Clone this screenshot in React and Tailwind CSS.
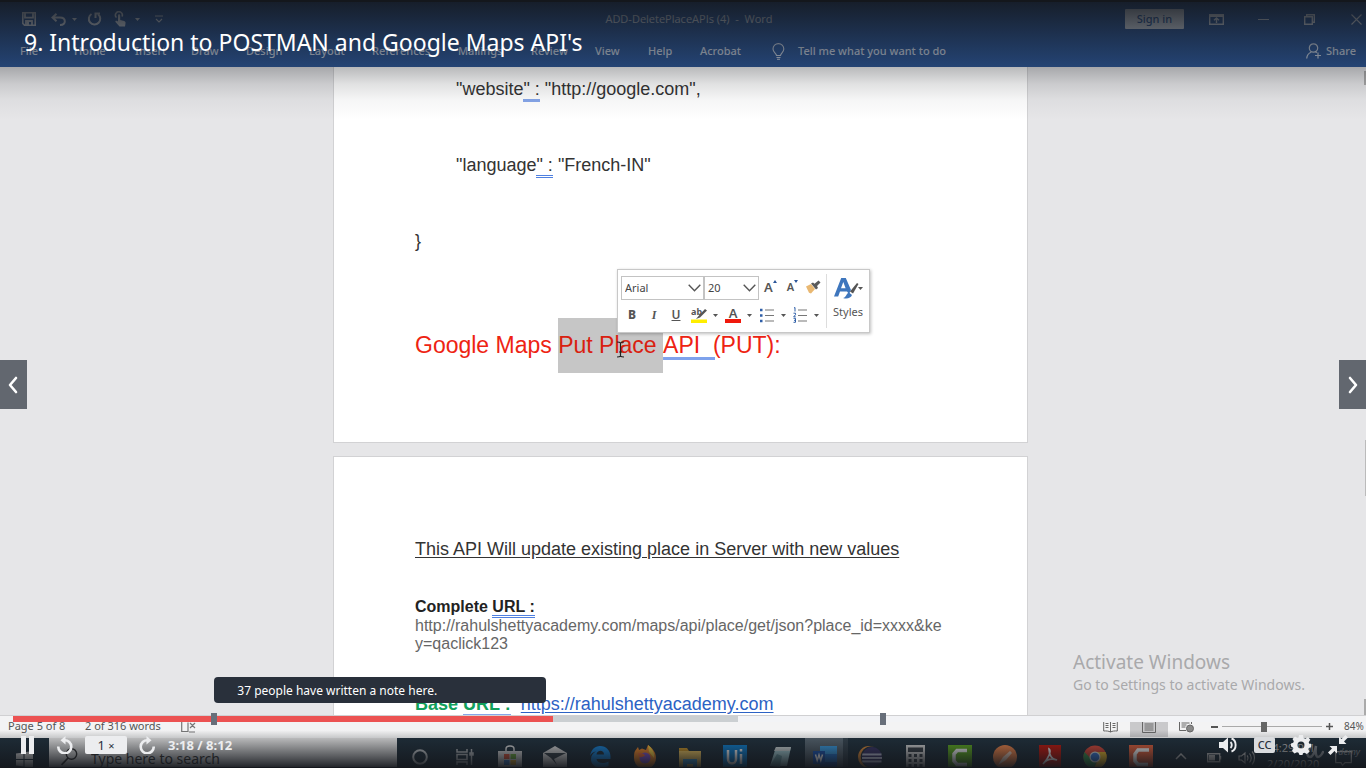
import React from "react";

const ui = "font-['Noto_Sans','Open_Sans',sans-serif]";

const tabs = [
  ["File", "w-[54px]"],
  ["Home", "w-[61px]"],
  ["Insert", "w-[56px]"],
  ["Draw", "w-[55px]"],
  ["Design", "w-[63px]"],
  ["Layout", "w-[63px]"],
  ["References", "w-[86px]"],
  ["Mailings", "w-[73px]"],
  ["Review", "w-[64px]"],
  ["View", "w-[53px]"],
  ["Help", "w-[52px]"],
  ["Acrobat", "w-[72px]"],
];

function Svg({ w = 16, h = 16, box, className = "", children }) {
  return (
    <svg
      width={w}
      height={h}
      viewBox={box || `0 0 ${w} ${h}`}
      className={`shrink-0 ${className}`}
      fill="none"
      stroke="currentColor"
      strokeWidth="1.4"
      aria-hidden="true"
    >
      {children}
    </svg>
  );
}

function Caret({ className = "" }) {
  return (
    <Svg w={5} h={3} className={className}>
      <path d="M0 0h5L2.500 3z" fill="currentColor" stroke="none" />
    </Svg>
  );
}

function TitleBar() {
  return (
    <div className="grid h-[34px] grid-cols-[1fr_auto_1fr] items-center pl-3 text-white">
      <div className="flex items-center pl-[10px] opacity-80">
        <button aria-label="Save">
          <Svg w={14} h={14}>
            <path d="M.7.7h12.600v12.600H2.700l-2-2z M3 .7v5h8v-5 M4 13V9h6v4" strokeWidth="1.800" />
            <path d="M5 10h2v3H5z" fill="currentColor" stroke="none" />
          </Svg>
        </button>
        <button aria-label="Undo" className="ml-[15px] flex items-center gap-[6px]">
          <Svg w={15} h={13}>
            <path d="M5.500.8 1.500 4.500l4 3.700M2 4.500h7c3 0 4.800 1.400 4.800 3.800S12 12 9 12" strokeWidth="2" />
          </Svg>
          <Caret />
        </button>
        <button aria-label="Repeat" className="ml-[10px]">
          <Svg w={15} h={14}>
            <path d="M4.500 2A5.700 5.700 0 1 0 11 2.300" strokeWidth="2" />
            <path d="M8.500 6V1.500H13" strokeWidth="2" />
          </Svg>
        </button>
        <button aria-label="Touch mode" className="ml-3 flex items-center gap-[9px]">
          <Svg w={12} h={16}>
            <path d="M2.500 6.500A3.400 3.400 0 1 1 8 5.500" strokeWidth="1.600" />
            <path
              d="M4 4.500c0-1.600 2.200-1.600 2.200 0V9l4 1c1.300.4 1.500 1.200 1.300 2.500L11 15.500H5.500L1.500 11c-.6-1 .5-1.700 1.300-1.200L4 10.500z"
              fill="currentColor"
              stroke="none"
            />
          </Svg>
          <Caret />
        </button>
        <button aria-label="Customize toolbar" className="ml-[15px]">
          <Svg w={8} h={8}>
            <path d="M0 1h8M1 4l3 3 3-3" strokeWidth="1.100" />
          </Svg>
        </button>
      </div>
      <div className="font-['Open_Sans','Noto_Sans',sans-serif] text-[11px] font-medium whitespace-pre opacity-80">
        {"ADD-DeletePlaceAPIs (4)  -  Word"}
      </div>
      <div className="flex items-center justify-end pr-1 opacity-80">
        <button className="h-5 w-[59px] rounded-[1px] bg-white text-[11px] font-medium text-[#2b579a]">Sign in</button>
        <button aria-label="Ribbon options" className="ml-[25px]">
          <Svg w={15} h={11}>
            <path d="M.7.700h13.600v9.600H.700zM.7 2.200h13.600M7.500 9V4M5 6.200 7.500 4 10 6.200" />
          </Svg>
        </button>
        <button aria-label="Minimize" className="ml-[34px]">
          <Svg w={11} h={11}>
            <path d="M0 5.500h11" strokeWidth="1" />
          </Svg>
        </button>
        <button aria-label="Restore" className="ml-[35px]">
          <Svg w={11} h={11}>
            <path d="M.7 2.700h7.600v7.600H.700zM2.700 2.500V.7h7.600v7.600H8.500" />
          </Svg>
        </button>
        <button aria-label="Close" className="ml-9">
          <Svg w={11} h={11}>
            <path d="m.5.500 10 10m0-10-10 10" strokeWidth="1.100" />
          </Svg>
        </button>
      </div>
    </div>
  );
}

function Ribbon() {
  return (
    <nav className="flex h-[31px] items-center pr-[10px] pb-px pl-5 text-[11px] font-medium text-white/75">
      {tabs.map(([name, width]) => (
        <button key={name} className={`${width} shrink-0 text-left`}>
          {name}
        </button>
      ))}
      <button className="flex shrink-0 items-center gap-[13px]">
        <Svg w={13} h={17}>
          <path d="M4.500 12.500c0-2-3.500-3.200-3.500-6.500a5.400 5.400 0 0 1 10.800 0c0 3.300-3.300 4.500-3.300 6.500zM4.500 14.500h4M5 16.300h3" strokeWidth="1.100" />
        </Svg>
        Tell me what you want to do
      </button>
      <button className="ml-auto flex shrink-0 items-center gap-[5px]">
        <Svg w={15} h={16}>
          <circle cx="7.500" cy="5" r="4.200" strokeWidth="1.200" />
          <path d="M.700 15.500c.3-3.500 2-5.500 4.500-6.300M9.500 9c.6.200 1 .4 1.400.8M12 9.500v6M9 12.500h6" strokeWidth="1.200" />
        </Svg>
        Share
      </button>
    </nav>
  );
}

function Grammar({ children, solid }) {
  return (
    <span className={solid ? "border-b-[3px] border-[#86a6ea]" : "border-b-[3px] border-double border-[#4f80e0]"}>
      {children}
    </span>
  );
}

function MiniToolbar() {
  const box = "h-6 w-full appearance-none border border-[#c3c3c3] bg-white pl-[3px] text-[11px] text-[#444]";
  return (
    <div
      className={`absolute top-[202px] left-[283px] flex h-[64px] w-[253px] border border-[#c8c8c8] bg-white text-[#555] shadow-[1px_1px_3px_rgba(0,0,0,0.25)] ${ui}`}
    >
      <div className="flex flex-1 flex-col pt-[5px] pl-[3px]">
        <div className="flex h-6 items-center">
          <div className="relative w-[83px]">
            <select aria-label="Font" className={box}>
              <option>Arial</option>
            </select>
            <Svg w={13} h={8} className="pointer-events-none absolute top-[9px] right-[3px]">
              <path d="m.7.700 5.800 6 5.800-6" />
            </Svg>
          </div>
          <div className="relative w-[55px]">
            <select aria-label="Font size" className={box}>
              <option>20</option>
            </select>
            <Svg w={13} h={8} className="pointer-events-none absolute top-[9px] right-[3px]">
              <path d="m.7.700 5.800 6 5.800-6" />
            </Svg>
          </div>
          <button aria-label="Grow font" className="ml-[5px] flex items-center">
            <span className="text-[13px] leading-6 font-semibold">A</span>
            <Svg w={4} h={3} className="mb-3">
              <path d="M0 3h4L2 0z" fill="#2b579a" stroke="none" />
            </Svg>
          </button>
          <button aria-label="Shrink font" className="ml-[10px] flex items-center">
            <span className="text-[11px] leading-6 font-semibold">A</span>
            <Svg w={4} h={3} className="mb-3">
              <path d="M0 0h4L2 3z" fill="#2b579a" stroke="none" />
            </Svg>
          </button>
          <button aria-label="Format painter" className="ml-[7px]">
            <Svg w={16} h={14}>
              <path d="M1 6.500 6 4l4 5-4 4.500-2-.8z" fill="#e9b872" stroke="none" />
              <path d="m6 3.500 2-1 1.500 1.300L13.500.5 15.500 2.500 12 6l1 2-2 1.500z" fill="#5a5a5a" stroke="none" />
            </Svg>
          </button>
        </div>
        <div className="flex h-7 items-center pt-1 text-[12px]">
          <button aria-label="Bold" className="w-[22px] font-extrabold">B</button>
          <button aria-label="Italic" className="w-[22px] font-['Liberation_Serif',serif] font-bold italic">I</button>
          <button aria-label="Underline" className="w-[22px] font-semibold underline">U</button>
          <button aria-label="Highlight" className="ml-1 flex items-center gap-[5px]">
            <Svg w={17} h={17}>
              <text x="0" y="8" fontSize="9" fontWeight="bold" fill="#555" stroke="none">ab</text>
              <path d="m5 12 2.500-3L14 2l2 1.500-7 7z" fill="#555" stroke="none" />
              <path d="M0 12.500h16V16H0z" fill="#ffee00" stroke="none" />
            </Svg>
            <Caret />
          </button>
          <button aria-label="Font color" className="ml-[7px] flex items-center gap-[6px]">
            <span className="h-[16px] w-4 border-b-[4px] border-[#f0180c] text-center text-[13px] leading-[13px] font-semibold">A</span>
            <Caret />
          </button>
          <button aria-label="Bullets" className="ml-2 flex items-center gap-[7px]">
            <Svg w={14} h={15}>
              <path d="M5 2h9M5 7.500h9M5 13h9" strokeWidth="1.200" stroke="#777" />
              <path d="M0 .8h2.500v2.500H0zM0 6.300h2.500v2.500H0zM0 11.800h2.500v2.500H0z" fill="#2f5fa8" stroke="none" />
            </Svg>
            <Caret />
          </button>
          <button aria-label="Numbering" className="ml-[7px] flex items-center gap-[6px]">
            <Svg w={15} h={16}>
              <path d="M5 3h9M5 8.500h9M5 14h9" strokeWidth="1.200" stroke="#777" />
              <path d="M1 1l1-.5V4.500M.5 6.200h2v1.500L.7 9.800h2M.5 11.300h2v4h-2M1 13.300h1.500" stroke="#2f5fa8" strokeWidth="1" />
            </Svg>
            <Caret />
          </button>
        </div>
      </div>
      <div className="my-1 flex w-[43px] flex-col items-center border-l border-[#ddd] pt-[2px]">
        <button className="flex flex-col items-center gap-[3px] text-[11px] leading-4">
          <Svg w={31} h={25}>
            <path d="M1 20.500 8.200 2h4.600L18 14l-2 4-2-2.500H7L5.200 20.500zM8 12.300h4.600L10.300 6z" fill="#3e76bd" fillRule="evenodd" stroke="none" />
            <path d="M10 22c3 0 3-4.500 6-5.500l3 2.500c-1 3-5 4.500-9 3z" fill="#3e76bd" stroke="none" />
            <path d="m17 15.500 7-8.500 1.500 1-5.500 9.500z" fill="#555" stroke="none" />
            <path d="M25 11h5l-2.500 3z" fill="#555" stroke="none" />
          </Svg>
          Styles
        </button>
      </div>
    </div>
  );
}

function Document() {
  const page = "w-full max-w-[695px] border-x border-[#d2d2d4] bg-white px-[81px] text-[18px] leading-5 text-[#333]";
  return (
    <main className="flex min-h-0 flex-1 overflow-hidden bg-[#e6e6e8] font-['Liberation_Sans',Arial,sans-serif]">
      <div className="relative flex min-w-0 flex-1 flex-col items-center gap-[13px] pr-px">
        <section className={`relative shrink-0 border-b pt-3 pb-[69px] ${page}`}>
          <p className="pl-[41px]">
            "website<Grammar solid>" :</Grammar> "http://google.com",
          </p>
          <p className="mt-14 pl-[41px]">
            "language<Grammar>" :</Grammar> "French-IN"
          </p>
          <p className="mt-14">{"}"}</p>
          <h2 className="mt-[67px] flex text-[23px] leading-[55px] whitespace-pre text-[#ee2312]">
            {"Google Maps "}
            <span className="relative bg-[#c6c6c6] text-[#d9200f]">
              {"Put Place "}
              <Svg w={9} h={17} className="absolute top-[23px] left-[58px] text-[#222]">
                <path d="M1 1c2 0 3 .3 3.500 1C5 1.300 6 1 8 1M4.500 2v13M1 16c2 0 3-.3 3.500-1 .5.700 1.500 1 3.500 1M3 11h3" strokeWidth="1.200" />
              </Svg>
            </span>
            <span className="underline decoration-[#7ea2ec] decoration-[3px] underline-offset-4">{"API  ("}</span>PUT):
          </h2>
          <MiniToolbar />
        </section>
        <section className={`flex-1 border-t pt-[82px] ${page}`}>
          <p className="whitespace-nowrap underline underline-offset-2">
            This API Will update existing place in Server with new values
          </p>
          <p className="mt-[38px] text-[16px] font-bold text-[#222]">
            Complete <Grammar>URL :</Grammar>
          </p>
          <p className="text-[16px] leading-[18px] break-all text-[#666]">
            http://rahulshettyacademy.com/maps/api/place/get/json?place_id=xxxx&ke
            <wbr />
            y=qaclick123
          </p>
          <p className="mt-[41px] text-[18px] whitespace-pre">
            <b className="text-[#12a05c]">
              Base <Grammar solid>URL :</Grammar>
            </b>
            {"  "}
            <a href="https://rahulshettyacademy.com" className="text-[#2c62c4] underline underline-offset-2">
              https://rahulshettyacademy.com
            </a>
          </p>
        </section>
      </div>
      <div className="flex w-1 flex-col justify-between pt-1">
        <div className="ml-[2px] h-[14px] border border-[#aaa] bg-white" />
        <div className="mt-[355px] ml-[3px] h-14 bg-[#bbb]" />
        <div className="mt-auto ml-[2px] h-4 border border-[#aaa] bg-white" />
      </div>
    </main>
  );
}

function StatusBar() {
  return (
    <div className="flex h-[23px] shrink-0 items-center border-t border-[#d0d0d2] bg-[#f3f3f4] pb-px pl-2 text-[11px] text-[#555]">
      <span className="w-[77px]">Page 5 of 8</span>
      <span className="w-24">2 of 316 words</span>
      <Svg w={15} h={12} className="text-[#777]">
        <path d="M5 .5H.7v10H7V1.500M9 2l5 5m0-5-5 5M8 11h6" strokeWidth="1.200" />
      </Svg>
      <div className="ml-auto flex h-full items-center">
        <button aria-label="Read mode" className="mr-3">
          <Svg w={15} h={13} className="text-[#666]">
            <path d="M7.500 2C6 1 3 .8.7 1v10c2.500-.2 5 0 6.800 1 1.800-1 4.300-1.200 6.800-1V1C12 .8 9 1 7.500 2zv10M2.500 3.500h3M2.500 5.500h3M2.500 7.500h3M9.500 3.500h3M9.500 5.500h3M9.500 7.500h3" strokeWidth="1" />
          </Svg>
        </button>
        <button aria-label="Print layout" className="flex h-full w-[38px] items-center justify-center bg-[#c9c9cb]">
          <Svg w={14} h={12} className="text-[#666]">
            <path d="M.5.500h13v11H.500zM2.500 3h9M2.500 5h9M2.500 7h9M2.500 9h9" strokeWidth="1" />
          </Svg>
        </button>
        <button aria-label="Web layout" className="mr-4 ml-[11px]">
          <Svg w={16} h={13} className="text-[#666]">
            <path d="M12.500 4V.500H.500v10H7M2.500 3h8M2.500 5h5M2.500 7h4" strokeWidth="1" />
            <circle cx="11" cy="8.500" r="3.500" fill="#888" strokeWidth="1" />
          </Svg>
        </button>
        <button aria-label="Zoom out" className="h-[2px] w-[7px] bg-[#555]" />
        <input
          type="range"
          aria-label="Zoom"
          defaultValue="42"
          className="mx-1 h-3 w-[100px] appearance-none bg-[linear-gradient(#aaa,#aaa)] bg-[length:100%_1px] bg-center bg-no-repeat [&::-webkit-slider-thumb]:h-[11px] [&::-webkit-slider-thumb]:w-[6px] [&::-webkit-slider-thumb]:appearance-none [&::-webkit-slider-thumb]:bg-[#666]"
        />
        <button aria-label="Zoom in">
          <Svg w={7} h={7}>
            <path d="M0 3.500h7M3.500 0v7" strokeWidth="1.500" />
          </Svg>
        </button>
        <span className="ml-[11px] w-[22px] text-[10px]">84%</span>
      </div>
    </div>
  );
}

const apps = [
  ["Cortana", <circle cx="12" cy="12" r="6.800" stroke="#c8ccd0" strokeWidth="2" />],
  [
    "Task view",
    <path d="M4 4v3h10V4M4 20v-3h10v3M4 9.500h10v5H4zM18.500 4v16M17 8h3v2h-3z" stroke="#b4b8bc" strokeWidth="1.500" />,
  ],
  [
    "Store",
    <g stroke="none">
      <path d="M8 6V4c0-4 8-4 8 0v2" stroke="#ddd" strokeWidth="1.500" />
      <path d="M0 6h24v18H0z" fill="#d8d8d8" />
      <path d="M6 9h5.500v5H6z" fill="#e0563a" />
      <path d="M12.500 9H18v5h-5.500z" fill="#6fae3c" />
      <path d="M6 15h5.500v5H6z" fill="#3e7fd0" />
      <path d="M12.500 15H18v5h-5.500z" fill="#e8b030" />
    </g>,
  ],
  [
    "Mail",
    <g stroke="none">
      <path d="M0 8 12 1l12 7v14H0z" fill="#dadada" />
      <path d="m1 8 11 0 11 0-12 6 3 6-6-7z" fill="#38424a" />
    </g>,
  ],
  [
    "Edge",
    <g stroke="none">
      <path
        d="M2 11C3 4.500 7 1 12 1c6.500 0 10.500 5 10.500 10.500V14H8.500c.5 4 6.500 5.500 12 2.500v4.500C12 25 3 22 3 14c0-3.500 2-6 5-7.500-3 .5-4.800 2-6 4.500zm6.500-1.500h7.500c0-5-7-5-7.500 0z"
        fill="#1685dc"
        fillRule="evenodd"
      />
    </g>,
  ],
  [
    "Firefox",
    <g stroke="none">
      <path d="M2 6 5 2l1 3 3-1.500L13 5l2-5c4 3 8 7 8 13a11 11 0 0 1-22 0c0-3 0-5 1-7z" fill="#f78a28" />
      <path d="m15 0 1 7 5 6c1-5-2-10-6-13z" fill="#ffd544" />
      <circle cx="12" cy="13" r="5.500" fill="#8b5ad8" />
      <path d="M5 8c3 0 6 0 7 3-2 0-3 2-6 1z" fill="#ff7038" />
    </g>,
  ],
  [
    "File Explorer",
    <g stroke="none">
      <path d="M1 3h8l2 3H1z" fill="#d09a28" />
      <path d="M1 6h22v18H1z" fill="#f4ca62" />
      <path d="M5 14h14v10h-4v-5H9v5H5z" fill="#3f9ad4" />
    </g>,
  ],
  [
    "UiPath",
    <g stroke="none">
      <path d="M0 0h24v24H0z" fill="#0d7fd0" />
      <path d="M5 5v9c0 6 8 6 8 0V5M18 9v10M18 4v2.500" stroke="#fff" strokeWidth="2.500" />
    </g>,
  ],
  [
    "Notepad",
    <g stroke="none">
      <path d="M8 2h15l-4 19H2z" fill="#a8d2d8" />
      <path d="M8 2h15l-1 4H6z" fill="#d4dddd" />
      <path d="m2 21 7-12 5 2-2 11z" fill="#6e9fa7" />
    </g>,
  ],
  [
    "Word",
    <g stroke="none">
      <path d="M7 1h17v8H7z" fill="#3aa0e8" />
      <path d="M7 9h17v8H7z" fill="#2474d0" />
      <path d="M7 17h17v7H7z" fill="#174fa8" />
      <path d="M0 6h12v13H0z" fill="#1b55b4" />
      <path d="m2.500 9.500 1.700 6L6 10l1.800 5.500 1.700-6" stroke="#fff" strokeWidth="1.500" />
    </g>,
  ],
  [
    "Eclipse",
    <g stroke="none">
      <circle cx="11" cy="12" r="11" fill="#e8913a" />
      <circle cx="13.500" cy="12" r="10.800" fill="#20303c" />
      <circle cx="14" cy="12" r="10" fill="#3b3568" />
      <path d="M4.500 8.500h19v2H4zM4 12h20v2H4zM4 15.500H23.500v2H4.500z" fill="#c3c5dc" />
    </g>,
  ],
  [
    "Calculator",
    <g stroke="none">
      <path d="M3 0h19v24H3z" fill="#d4d4d4" />
      <path d="M5 2.500h15v4.500H5zM5.500 9h3v3h-3zM11 9h3v3h-3zM16.500 9h3v3h-3zM5.500 14h3v3h-3zM11 14h3v3h-3zM16.500 14h3v3h-3zM5.500 19h3v3h-3zM11 19h3v3h-3zM16.500 19h3v3h-3z" fill="#3a4148" />
    </g>,
  ],
  [
    "Camtasia",
    <g stroke="none">
      <path d="M0 0h24v24H0z" fill="#5eaa20" />
      <path d="M19 5.500H9L6 9v7l3 3.500h10" stroke="#fff" strokeWidth="3.500" />
    </g>,
  ],
  [
    "Postman",
    <g stroke="none">
      <circle cx="12" cy="12" r="12" fill="#f0854a" />
      <path d="m5 20 5-8 7-6 2 2-6 7z" fill="#f7d8c4" />
    </g>,
  ],
  [
    "Acrobat",
    <g stroke="none">
      <path d="M1 0h22v24H1z" fill="#c4170c" />
      <path d="M11 4c3 2-1 10-6 15 3-4 8-6 14-4-5 0-8-5-8-11z" stroke="#fff" strokeWidth="1.600" />
    </g>,
  ],
  [
    "Chrome",
    <g stroke="none">
      <circle cx="12" cy="12" r="11.500" fill="#e04a3a" />
      <path d="M1.500 7a11.500 11.500 0 0 0 9.500 16.500L15 14l-6 1z" fill="#3a9c50" />
      <path d="M12 7h10.500A11.500 11.500 0 0 1 11 23.500L16 13z" fill="#f4c22c" />
      <circle cx="12" cy="12" r="5.500" fill="#eee" />
      <circle cx="12" cy="12" r="4.300" fill="#3c7de0" />
    </g>,
  ],
  [
    "Recorder",
    <g stroke="none">
      <path d="M0 0h24v24H0z" fill="#e2603c" />
      <path d="M20 5H9L6 9v7l3 3.500h10" stroke="#fff" strokeWidth="3.500" />
    </g>,
  ],
];

function Taskbar() {
  return (
    <footer className="flex h-[29px] shrink-0 overflow-hidden bg-[#20303c] text-[#bbb]">
      <div className="flex w-[397px] shrink-0">
        <button aria-label="Start" className="flex w-[49px] justify-center pt-[13px]">
          <Svg w={17} h={17}>
            <path d="M0 2.500 7.500 1.500V8H0zM8.500 1.300 17 0v8H8.500zM0 9h7.500v6.500L0 14.500zM8.500 9H17v8l-8.500-1.200z" fill="#ddd" stroke="none" />
          </Svg>
        </button>
        <label className="flex flex-1 items-start gap-[13px] bg-[#e2e2e2] pt-[10px] pl-3 text-[#333]">
          <Svg w={17} h={18}>
            <circle cx="10.500" cy="6" r="5.200" />
            <path d="m7 10-6.500 7" strokeWidth="1.800" />
          </Svg>
          <input
            aria-label="Search"
            placeholder="Type here to search"
            className="h-5 w-full min-w-0 bg-transparent text-[14px] placeholder:text-[#333]"
          />
        </label>
      </div>
      <div className="flex flex-1">
        {apps.map(([name, art]) => (
          <button
            key={name}
            aria-label={name}
            className={`flex flex-1 items-start justify-center pt-[7px] ${name === "Word" ? "bg-[linear-gradient(90deg,transparent_2px,#55636e_2px,#55636e_40px,#35434e_40px)]" : ""}`}
          >
            <Svg w={24} h={24}>{art}</Svg>
          </button>
        ))}
      </div>
      <div className="flex w-[203px] shrink-0 items-start pt-3 pl-3 text-[11px]">
        <Svg w={12} h={16}>
          <path d="m1 9 5-5 5 5" strokeWidth="1.500" />
        </Svg>
        <Svg w={15} h={16} className="ml-5">
          <path d="M.7 3.700h12v8H.700zM13.500 6v3.500" />
          <path d="M2 5h6v5.500H2z" fill="currentColor" stroke="none" />
        </Svg>
        <Svg w={17} h={16} className="ml-4">
          <path d="M1 6h2.500L7 3v10L3.500 10H1zM9 5.500c1.300 1.300 1.300 3.700 0 5M11.500 3.500c2.300 2.500 2.300 6.500 0 9M14 1.500c3.300 3.500 3.300 9.500 0 13" strokeWidth="1.100" />
        </Svg>
        <div className="-mt-3 ml-3 text-center text-[11px] leading-4">
          <div className="pt-[2px]">4:29 PM</div>
          <div>2/20/2020</div>
        </div>
        <Svg w={17} h={17} className="ml-4">
          <path d="M.7 1.700h15.600v11H10L7.500 15.500 6 12.700H.700z" strokeWidth="1.200" />
        </Svg>
      </div>
    </footer>
  );
}

function Brand() {
  return (
    <div className="pointer-events-none absolute right-[6px] bottom-[9px] flex items-center gap-[14px] text-[#8a9096]">
      <Svg w={18} h={15}>
        <path d="M2 3C.5 8 1 13 4 13s5-6 6-11c-1 6 0 11 2 11s4-3 5-5" strokeWidth="2.500" strokeLinecap="round" />
      </Svg>
      <span className="text-[9px] italic">demy</span>
    </div>
  );
}

function Watermark() {
  return (
    <div className="pointer-events-none absolute right-[56px] bottom-[73px] w-[237px] whitespace-nowrap text-[#a9a9ab]">
      <div className="text-[19px] leading-[26px]">Activate Windows</div>
      <div className="text-[14px] leading-5">Go to Settings to activate Windows.</div>
    </div>
  );
}

function Progress() {
  return (
    <div className="absolute right-[11px] bottom-[43px] left-[13px] h-3">
      <div className="mt-[3px] h-[6px] bg-[#f2f3f6]">
        <div className="h-full w-[54%] bg-[#cbcfd2]">
          <div className="h-full w-[74.500%] bg-[#ec5252]" />
        </div>
      </div>
      <span className="absolute top-0 left-[15%] h-3 w-[6px] -translate-x-1/2 bg-[#686f7a]" />
      <span className="absolute top-0 left-[64.800%] h-3 w-[6px] -translate-x-1/2 bg-[#686f7a]" />
      <input
        type="range"
        aria-label="Playback position"
        max="492"
        defaultValue="198"
        className="absolute inset-0 h-3 w-full appearance-none bg-transparent [&::-webkit-slider-thumb]:h-3 [&::-webkit-slider-thumb]:w-3 [&::-webkit-slider-thumb]:appearance-none"
      />
      <div className="absolute bottom-[22px] left-[15%] h-[26px] w-[332px] rounded-[4px] bg-[#29303b] px-[23px] text-[12px] leading-[27px] text-white">
        37 people have written a note here.
      </div>
    </div>
  );
}

function Replay({ flip, label, className }) {
  return (
    <button aria-label={label} className={className}>
      <Svg w={16} h={18} className={flip ? "-scale-x-100" : ""}>
        <path d="M1.300 10.500A6.500 6.500 0 1 0 7.500 4.300" strokeWidth="2.600" />
        <path d="M8.500 0v8.600L3.500 4.300z" fill="currentColor" stroke="none" />
      </Svg>
    </button>
  );
}

function Controls() {
  return (
    <div className="absolute inset-x-0 bottom-[14px] flex h-[18px] items-center px-[18px] text-[#ecedef]">
      <button aria-label="Pause" className="ml-[3px]">
        <Svg w={13} h={18}>
          <path d="M0 0h5v18H0zM8 0h5v18H8z" fill="currentColor" stroke="none" />
        </Svg>
      </button>
      <Replay label="Rewind" className="ml-[23px]" />
      <button className="ml-3 h-[18px] w-[42px] rounded-[2px] bg-[#ecedef] text-[13px] leading-[18px] text-[#29303b]">
        1 <span className="text-[11px]">×</span>
      </button>
      <Replay label="Forward" flip className="ml-3" />
      <span className="ml-[13px] text-[13px] leading-[18px] font-bold">3:18 / 8:12</span>
      <button aria-label="Volume" className="ml-auto">
        <Svg w={19} h={16}>
          <path d="M0 5h4l5-4.500v15L4 11H0z" fill="currentColor" stroke="none" />
          <path d="M11.500 5c1.700 1.500 1.700 4.500 0 6M12.500 1.500c5.500 2 5.500 11 0 13" strokeWidth="1.900" />
        </Svg>
      </button>
      <button aria-label="Captions" className="ml-4 h-4 w-[21px] rounded-[2px] bg-[#d9dbde] text-[11px] leading-4 font-medium text-[#29303b]">
        CC
      </button>
      <button aria-label="Settings" className="ml-4">
        <Svg w={20} h={20}>
          <path
            d="M8 0h4l.5 3 2 .8L17 2l2.300 2.700-1.600 2.600.6 1.500H20v3.500l-2.200.7-.5 1.200 1.200 2.500-2.600 2.400-2.400-1.400-1.500.6L11.500 20h-3l-1-2.200-1.500-.6L3.500 18.500 1 16l1.400-2.400-.6-1.400L0 11.500v-3l2.200-.7.6-1.500L1.500 4 4 1.500l2.500 1.300 1-.4zM10 6.500a3.500 3.500 0 1 0 0 7 3.500 3.500 0 0 0 0-7z"
            fill="currentColor"
            fillRule="evenodd"
            stroke="none"
          />
        </Svg>
      </button>
      <button aria-label="Exit full screen" className="ml-[17px]">
        <Svg w={20} h={20}>
          <path d="M11 9V1.500l2.500 2.500L17.500 0 20 2.500 16 6.500 18.500 9zM9 11v7.500L6.500 16l-4 4L0 17.500l4-4L1.500 11z" fill="currentColor" stroke="none" />
        </Svg>
      </button>
    </div>
  );
}

function SideButton({ label, side, d }) {
  return (
    <button
      aria-label={label}
      className={`absolute top-1/2 flex h-[49px] w-[27px] -translate-y-[24px] items-center justify-center bg-[#62676f] text-white ${side}`}
    >
      <Svg w={12} h={18}>
        <path d={d} strokeWidth="2.600" strokeLinecap="round" strokeLinejoin="round" />
      </Svg>
    </button>
  );
}

export default function App() {
  return (
    <div className={`relative flex h-screen flex-col overflow-hidden bg-[#14171c] py-[2px] pb-px ${ui}`}>
      <header className="shrink-0 bg-[#2b579a]">
        <TitleBar />
        <Ribbon />
      </header>
      <Document />
      <StatusBar />
      <Taskbar />
      <Watermark />
      <Brand />
      <div className="pointer-events-none absolute inset-x-0 top-0 h-[120px] bg-[linear-gradient(rgba(20,23,28,0.9)_0px,rgba(20,23,28,0.74)_18px,rgba(20,23,28,0.3)_67px,rgba(20,23,28,0.13)_84px,rgba(20,23,28,0.04)_100px,rgba(20,23,28,0)_120px)]" />
      <div className="pointer-events-none absolute inset-x-0 bottom-0 h-[38px] bg-linear-to-b from-[#14171c]/0 to-[#14171c]/95" />
      <h1 className="absolute top-[26px] left-6 text-[23px] leading-8 text-white">
        9. Introduction to POSTMAN and Google Maps API's
      </h1>
      <SideButton label="Previous lecture" side="left-0" d="M8 2 2 9l6 7" />
      <SideButton label="Next lecture" side="right-0" d="M3 2 9 9l-6 7" />
      <Progress />
      <Controls />
    </div>
  );
}
